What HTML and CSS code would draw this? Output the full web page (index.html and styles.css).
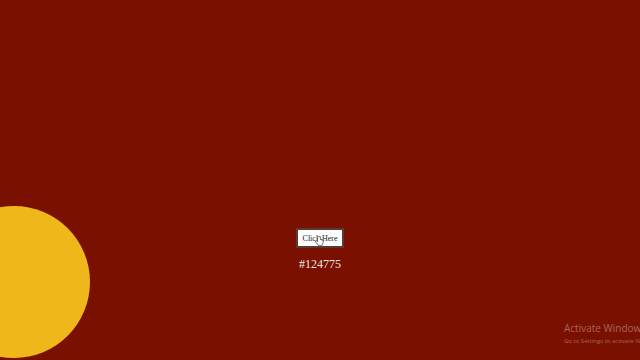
FILE: index.html
```html
<!DOCTYPE html>
<html>
<head>
<meta charset="utf-8">
<link rel="stylesheet" href="styles.css">
</head>
<body>
<div class="stage">
  <div class="sun"></div>
  <div class="center">
    <button class="btn">Click Here</button>
    <div class="code">#124775</div>
  </div>
  <svg class="cursor" width="9" height="11" viewBox="0 0 9 11">
    <path d="M2.5 0.8 v5 l-1-0.8 c-0.6-0.4-1.3 0.2-0.9 0.8 l2.4 3.5 h4.2 l0.9-2.6 v-2.4 c0-0.6-0.9-0.6-0.9 0 v-0.3 c0-0.6-0.9-0.6-0.9 0 v-0.3 c0-0.6-0.9-0.6-0.9 0 v-2.9 c0-0.6-1-0.6-1 0 z" fill="#fff" stroke="#222" stroke-width="0.6"/>
  </svg>
  <div class="watermark">
    <div class="wm-title">Activate Windows</div>
    <div class="wm-sub">Go to Settings to activate Windows.</div>
  </div>
</div>
</body>
</html>
```
FILE: styles.css
```css
html, body {
  margin: 0;
  padding: 0;
  width: 640px;
  height: 360px;
  overflow: hidden;
  background: #7a1100;
}
.stage {
  position: relative;
  width: 640px;
  height: 360px;
  display: flex;
  justify-content: center;
}
.sun {
  position: absolute;
  left: -62px;
  top: 206px;
  width: 152px;
  height: 152px;
  border-radius: 50%;
  background: #efb719;
}
.center {
  margin-top: 228px;
  display: flex;
  flex-direction: column;
  align-items: center;
  font-family: "Liberation Serif", serif;
}
.btn {
  width: 48px;
  height: 20px;
  padding: 0;
  background: #fdfdfd;
  border: 2px solid #5a3a34;
  font-family: "Liberation Serif", serif;
  font-size: 8px;
  color: #222;
}
.code {
  margin-top: 9px;
  font-size: 12px;
  color: #f3e6e0;
}
.cursor {
  position: absolute;
  left: 315px;
  top: 236px;
}
.watermark {
  position: absolute;
  left: 564px;
  top: 321px;
  font-family: "Open Sans", sans-serif;
  color: rgba(255, 255, 255, 0.35);
  white-space: nowrap;
}
.wm-title {
  font-size: 10px;
}
.wm-sub {
  font-size: 6px;
  margin-top: 2px;
}
```
